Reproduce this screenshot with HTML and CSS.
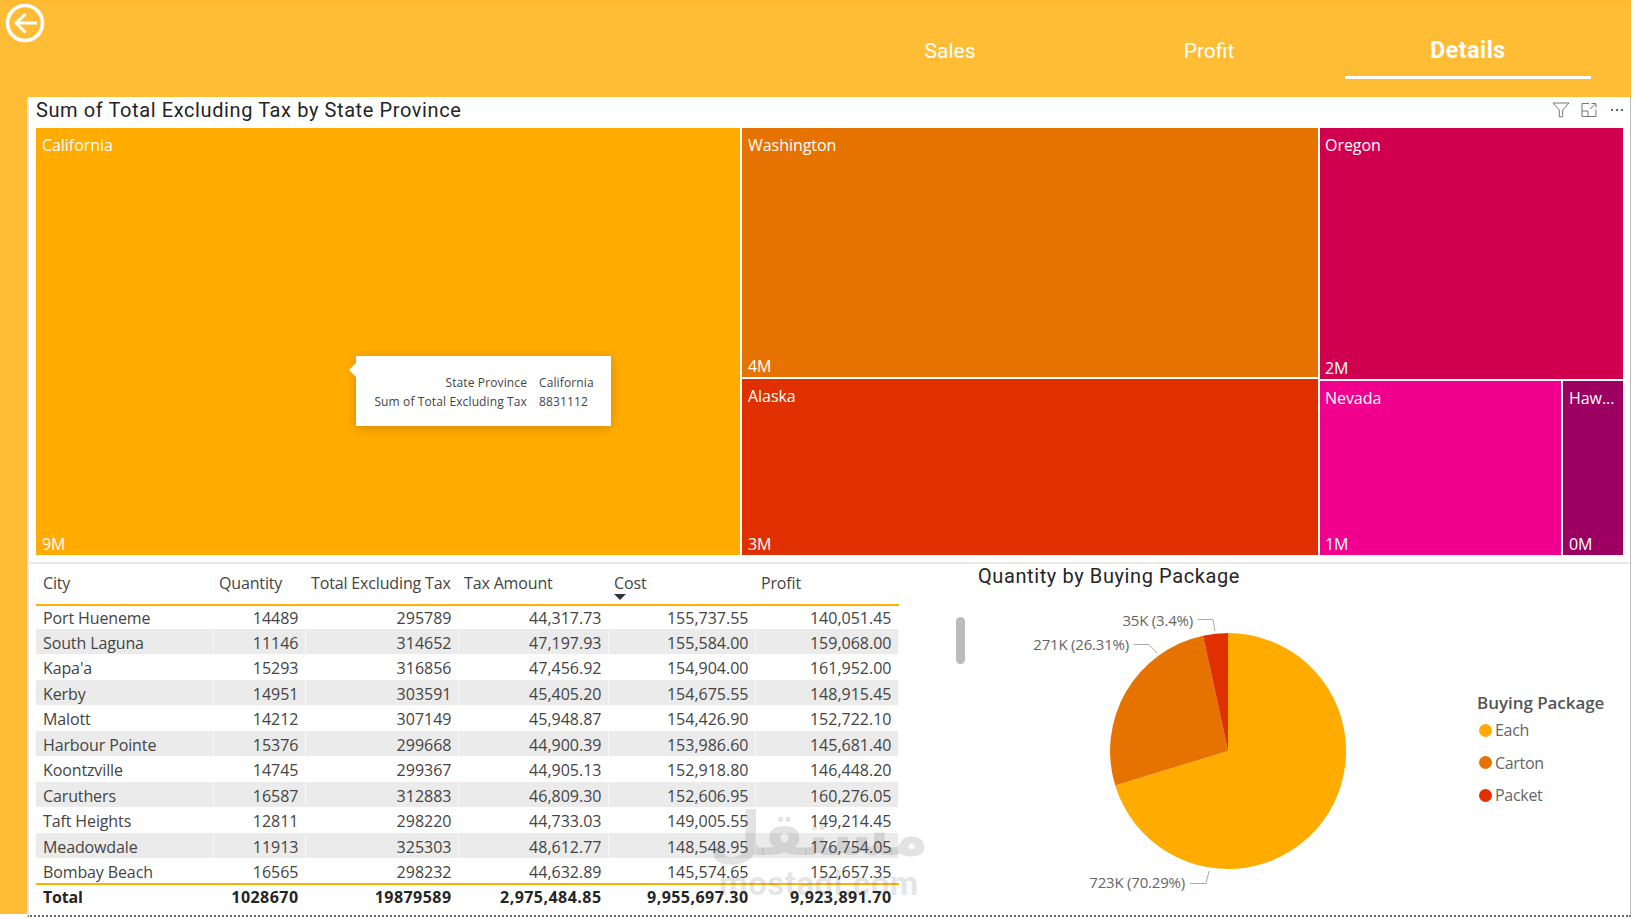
FILE: index.html
```html
<!DOCTYPE html>
<html lang="en">
<head>
<meta charset="utf-8">
<title>Details</title>
<link rel="stylesheet" href="styles.css">
</head>
<body>
<div class="report">
  <header class="topbar">
    <svg class="back" viewBox="0 0 40 40" width="40" height="40">
      <circle cx="20" cy="20" r="17.5" fill="none" stroke="#fff" stroke-width="3.6"/>
      <path d="M32 20H11.5M20.5 11L11 20L20.5 29.5" fill="none" stroke="#fff" stroke-width="3"/>
    </svg>
    <nav class="tabs">
      <div class="tab">Sales</div>
      <div class="tab">Profit</div>
      <div class="tab active">Details</div>
    </nav>
  </header>
  <main class="canvas">
    <section class="tree-visual">
      <div class="visual-head">
        <h2 class="visual-title">Sum of Total Excluding Tax by State Province</h2>
        <div class="visual-tools">
          <svg width="18" height="16" viewBox="0 0 18 16"><path d="M1 1H17L10.7 8V14.8H7.3V8Z" fill="none" stroke="#777" stroke-width="1"/></svg>
          <svg class="tool-expand" width="16" height="14" viewBox="0 0 16 14"><path d="M8 .5H1V13.5H15V6.5M1 8H7V13.5M9 6L15 .5M10.5 .5H15V4.5" fill="none" stroke="#777" stroke-width="1"/></svg>
          <span class="dots"><i></i><i></i><i></i></span>
        </div>
      </div>
      <div class="treemap">
        <div class="cell california"><span>California</span><span>9M</span></div>
        <div class="tree-col mid">
          <div class="cell washington"><span>Washington</span><span>4M</span></div>
          <div class="cell alaska"><span>Alaska</span><span>3M</span></div>
        </div>
        <div class="tree-col right">
          <div class="cell oregon"><span>Oregon</span><span>2M</span></div>
          <div class="tree-row">
            <div class="cell nevada"><span>Nevada</span><span>1M</span></div>
            <div class="cell hawaii"><span>Haw...</span><span>0M</span></div>
          </div>
        </div>
      </div>
      <div class="tooltip">
        <span class="tip-label">State Province</span><span>California</span>
        <span class="tip-label">Sum of Total Excluding Tax</span><span>8831112</span>
      </div>
    </section>
    <section class="lower">
      <div class="table-panel">
        <table class="grid">
          <colgroup>
            <col class="c1"><col class="c2"><col class="c3"><col class="c4"><col class="c5"><col class="c6">
          </colgroup>
          <thead>
            <tr><th>City</th><th>Quantity</th><th>Total Excluding Tax</th><th>Tax Amount</th><th class="sorted">Cost<i class="sort"></i></th><th>Profit</th></tr>
          </thead>
          <tbody>
            <tr><td>Port Hueneme</td><td>14489</td><td>295789</td><td>44,317.73</td><td>155,737.55</td><td>140,051.45</td></tr>
            <tr><td>South Laguna</td><td>11146</td><td>314652</td><td>47,197.93</td><td>155,584.00</td><td>159,068.00</td></tr>
            <tr><td>Kapa'a</td><td>15293</td><td>316856</td><td>47,456.92</td><td>154,904.00</td><td>161,952.00</td></tr>
            <tr><td>Kerby</td><td>14951</td><td>303591</td><td>45,405.20</td><td>154,675.55</td><td>148,915.45</td></tr>
            <tr><td>Malott</td><td>14212</td><td>307149</td><td>45,948.87</td><td>154,426.90</td><td>152,722.10</td></tr>
            <tr><td>Harbour Pointe</td><td>15376</td><td>299668</td><td>44,900.39</td><td>153,986.60</td><td>145,681.40</td></tr>
            <tr><td>Koontzville</td><td>14745</td><td>299367</td><td>44,905.13</td><td>152,918.80</td><td>146,448.20</td></tr>
            <tr><td>Caruthers</td><td>16587</td><td>312883</td><td>46,809.30</td><td>152,606.95</td><td>160,276.05</td></tr>
            <tr><td>Taft Heights</td><td>12811</td><td>298220</td><td>44,733.03</td><td>149,005.55</td><td>149,214.45</td></tr>
            <tr><td>Meadowdale</td><td>11913</td><td>325303</td><td>48,612.77</td><td>148,548.95</td><td>176,754.05</td></tr>
            <tr><td>Bombay Beach</td><td>16565</td><td>298232</td><td>44,632.89</td><td>145,574.65</td><td>152,657.35</td></tr>
          </tbody>
          <tfoot>
            <tr><td>Total</td><td>1028670</td><td>19879589</td><td>2,975,484.85</td><td>9,955,697.30</td><td>9,923,891.70</td></tr>
          </tfoot>
        </table>
        <div class="scrollbar"></div>
        <div class="watermark">
          <span class="wm-ar" lang="ar" dir="rtl">مستقل</span>
          <span class="wm-en">mostaql.com</span>
        </div>
      </div>
      <div class="pie-panel">
        <h2 class="visual-title pie-title">Quantity by Buying Package</h2>
        <div class="pie-body">
          <svg class="pie" width="490" height="310" viewBox="972 600 490 310">
            <path d="M1228 751V633A118 118 0 1 1 1115.2 785.5Z" fill="#FFAB00"/>
            <path d="M1228 751L1115.2 785.5A118 118 0 0 1 1203 635.7Z" fill="#E67300"/>
            <path d="M1228 751L1203 635.7A118 118 0 0 1 1228 633Z" fill="#E03000"/>
            <g fill="none" stroke="#aaa" stroke-width="1">
              <path d="M1198 619.5H1213L1215 631"/>
              <path d="M1134 644.5H1149L1157 653"/>
              <path d="M1190 883.5H1206L1209 871"/>
            </g>
            <g class="pie-label" text-anchor="end">
              <text x="1193" y="626">35K (3.4%)</text>
              <text x="1129" y="650">271K (26.31%)</text>
              <text x="1185" y="888">723K (70.29%)</text>
            </g>
          </svg>
          <div class="legend">
            <div class="legend-title">Buying Package</div>
            <div class="legend-item"><i class="dot each"></i>Each</div>
            <div class="legend-item"><i class="dot carton"></i>Carton</div>
            <div class="legend-item"><i class="dot packet"></i>Packet</div>
          </div>
        </div>
      </div>
    </section>
  </main>
</div>
</body>
</html>
```
FILE: styles.css
```css
* { box-sizing: border-box; }
html, body { margin: 0; height: 100%; background: #fff; overflow: hidden; }
body { font-family: "Open Sans", "Noto Sans", sans-serif; color: #444; }

.report { width: 1631px; height: 914px; background: #FFBD35; display: flex; flex-direction: column; }

.topbar { height: 97px; flex: none; display: flex; justify-content: space-between; align-items: flex-start; padding: 1px 40px 0 5px; border-top: 2px solid #FFB92C; }
.back { display: block; }
.tabs { display: flex; gap: 13px; margin-top: 29px; }
.tab { width: 246px; height: 47px; text-align: center; color: #fff; font-family: "Roboto", sans-serif; font-size: 21px; line-height: 38px; border-bottom: 3px solid transparent; }
.tab.active { font-weight: 700; font-size: 23px; letter-spacing: .55px; border-bottom-color: #fff; }

.canvas { flex: none; height: 820px; margin-left: 27px; background: #fff; border-left: 2px solid #E8E8E8; border-right: 1px solid #bbb; border-bottom: 2px dotted #666; display: flex; flex-direction: column; }

.tree-visual { position: relative; height: 467px; flex: none; padding: 0 7px 7px 7px; border-bottom: 2px solid #E8E8E8; display: flex; flex-direction: column; }
.visual-head { height: 31px; flex: none; display: flex; justify-content: space-between; align-items: flex-start; }
.visual-title { margin: 0; font-family: "Roboto", sans-serif; font-weight: 400; font-size: 20px; line-height: 26px; letter-spacing: .6px; color: #252525; white-space: nowrap; }
.visual-tools { display: flex; align-items: center; gap: 11px; padding-top: 5px; }
.visual-tools svg { display: block; }
.tool-expand { margin-right: 3px; }
.dots { display: flex; gap: 3px; }
.dots i { width: 2px; height: 2px; background: #666; display: block; }

.treemap { flex: none; height: 427px; width: 1587px; display: flex; gap: 2px; }
.tree-col { display: flex; flex-direction: column; gap: 2px; flex: none; }
.tree-col.mid { width: 576px; }
.tree-col.right { width: 303px; gap: 2px; }
.tree-row { display: flex; gap: 2px; height: 174px; flex: none; }
.cell { display: flex; flex-direction: column; justify-content: space-between; padding: 5px 6px 0; color: #fff; font-size: 16px; line-height: 24px; letter-spacing: -.05px; min-width: 0; white-space: nowrap; }
.cell span:last-child { font-size: 16px; line-height: 22px; letter-spacing: -.2px; }
.california { width: 704px; flex: none; background: #FFAB00; }
.washington { height: 249px; flex: none; background: #E67300; }
.alaska { flex: 1; background: #E03000; }
.oregon { flex: 1; background: #D1004F; padding-left: 5px; }
.nevada { flex: 1; background: #F0008C; padding-left: 5px; }
.hawaii { width: 60px; flex: none; background: #9C0060; }

.tooltip { position: absolute; left: 327px; top: 259px; width: 255px; height: 70px; background: #fff; box-shadow: 0 2px 10px rgba(0,0,0,.18); display: grid; grid-template-columns: 171px 1fr; column-gap: 12px; align-content: center; padding-top: 1px; font-size: 12px; line-height: 19px; color: #444; letter-spacing: .12px; }
.tooltip::before { content: ""; position: absolute; left: -7px; top: 7px; border-style: solid; border-width: 7px 7px 7px 0; border-color: transparent #fff transparent transparent; }
.tip-label { text-align: right; }

.lower { flex: 1; display: flex; min-height: 0; }
.table-panel { position: relative; width: 943px; flex: none; padding: 2px 0 0 7px; }
.grid { width: 862px; table-layout: fixed; border-collapse: collapse; font-size: 16px; color: #444; }
.c1 { width: 177px; } .c2 { width: 92px; } .c3 { width: 153px; } .c4 { width: 150px; } .c5 { width: 147px; } .c6 { width: 143px; }
.grid th { height: 39px; font-weight: 400; text-align: left; padding: 0 0 4px 6px; letter-spacing: -.15px; white-space: nowrap; border-bottom: 2px solid #FFB000; position: relative; }
.grid th:first-child { padding-left: 7px; }
.grid td { height: 25.5px; padding: 3px 6px 0 6px; text-align: right; white-space: nowrap; line-height: 20px; border-right: 1px solid rgba(255,255,255,.6); }
.grid td:first-child { text-align: left; letter-spacing: -.12px; padding-left: 7px; }
.grid tbody tr:first-child td { height: 23.5px; padding-top: 1px; }
.grid tbody tr:nth-child(even) td { background: #EBEBEB; }
.grid tfoot td { height: 26px; padding-top: 0; font-weight: 700; letter-spacing: .45px; color: #252525; border-top: 2px solid #FFB000; }
.grid tfoot td:first-child { letter-spacing: -.2px; }
.sort { position: absolute; left: 6px; top: 28px; border-style: solid; border-width: 6px 6px 0; border-color: #333 transparent transparent; }
.scrollbar { position: absolute; left: 927px; top: 53px; width: 9px; height: 47px; border-radius: 5px; background: #BBB; }
.watermark { position: absolute; left: 690px; top: 235px; width: 200px; display: flex; flex-direction: column; align-items: center; color: rgba(90,90,90,.17); pointer-events: none; }
.wm-ar { font-family: "DejaVu Sans", sans-serif; font-weight: 700; font-size: 60px; line-height: 70px; }
.wm-en { font-family: "Roboto", sans-serif; font-weight: 700; font-size: 33px; line-height: 30px; letter-spacing: .5px; }

.pie-panel { flex: 1; min-width: 0; display: flex; flex-direction: column; }
.pie-title { height: 36px; padding-left: 6px; line-height: 24px; }
.pie-body { display: flex; flex: 1; }
.pie { display: block; flex: none; }
.pie-label { font-size: 15px; fill: #666; letter-spacing: -.2px; }
.legend { margin: 91px 0 0 15px; display: flex; flex-direction: column; font-size: 16px; color: #666; letter-spacing: -.3px; }
.legend-title { font-weight: 600; font-size: 17px; letter-spacing: -.05px; color: #555; line-height: 23px; white-space: nowrap; }
.legend-item { display: flex; align-items: center; height: 32.5px; gap: 3px; padding-left: 2px; }
.dot { width: 13px; height: 13px; border-radius: 50%; display: block; }
.dot.each { background: #FFAB00; }
.dot.carton { background: #E67300; }
.dot.packet { background: #E03000; }
```
